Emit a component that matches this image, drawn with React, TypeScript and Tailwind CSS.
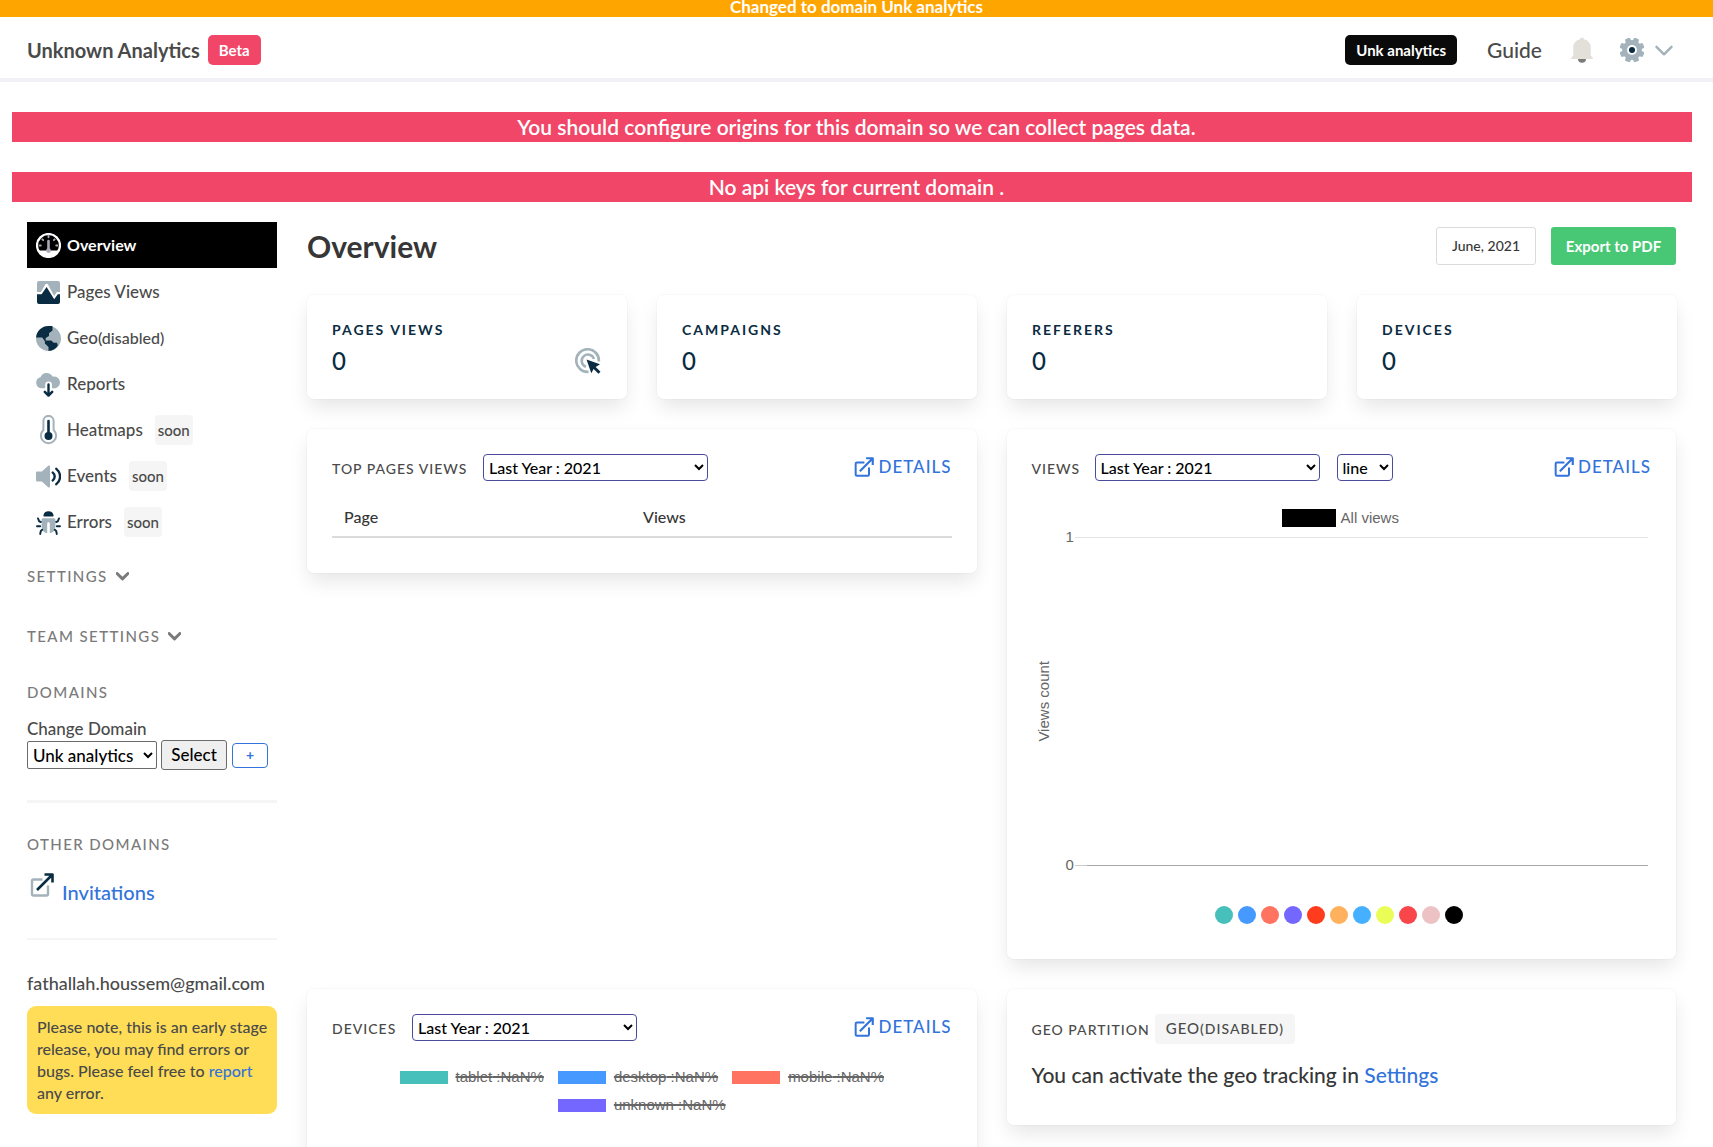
import type { ReactNode } from "react";

const DARK = "#0a2c42";
const SOFT = "#a4b3bb";

function GaugeIcon() {
  return (
    <svg viewBox="0 0 25 25" className="h-[25px] w-[25px]" aria-hidden="true">
      <circle cx="12.5" cy="12.5" r="11.5" fill="none" stroke="#fff" strokeWidth="2.2" />
      <path d="M2.5 17.5h20A12 12 0 0 1 12.5 24 12 12 0 0 1 2.5 17.5z" fill="#fff" />
      <g stroke="#a9a9b8" strokeLinecap="round">
        <path d="M12.5 8v9" strokeWidth="2.6" />
        <path d="M12.5 2.5v1.8M3.6 12.5h1.2M20.2 12.5h1.2M6.3 6.3l.9.9M18.7 6.3l-.9.9" strokeWidth="1.8" />
      </g>
      <circle cx="12.5" cy="17.6" r="2.4" fill="#a9a9b8" />
    </svg>
  );
}

function PagesIcon() {
  return (
    <svg viewBox="0 0 25 25" className="h-[25px] w-[25px]" aria-hidden="true">
      <path d="M3 1h19a2 2 0 0 1 2 2v9h-3.2l-2.6 4L12 4.5a1.6 1.6 0 0 0-2.9.2L5 12H1V3a2 2 0 0 1 2-2z" fill={SOFT} />
      <path d="M1 14.2h4.6L10.6 7l7.6 12.3 3.6-5.1H24V22a2 2 0 0 1-2 2H3a2 2 0 0 1-2-2z" fill={DARK} />
    </svg>
  );
}

function GlobeIcon() {
  return (
    <svg viewBox="0 0 25 25" className="h-[25px] w-[25px]" aria-hidden="true">
      <circle cx="12.5" cy="12.5" r="12.5" fill={SOFT} />
      <path d="M12.5 0h4v4.6L13 7.2v2.9L9.7 12v2.4h5.6l2.4 2.4h3.2l1 2.6A12.5 12.5 0 0 1 12.5 25v-4l-3.6-3.4v-2.4L6.2 11.6H.1A12.5 12.5 0 0 1 12.5 0z" fill={DARK} />
    </svg>
  );
}

function CloudIcon() {
  return (
    <svg viewBox="0 0 25 25" className="h-[25px] w-[25px]" aria-hidden="true">
      <path d="M6 16.2a5.6 5.6 0 0 1-1.6-11A6.8 6.8 0 0 1 16.6 4.6a5.8 5.8 0 0 1 2.8 11.6H16v-3.4a3.4 3.4 0 0 0-6.8 0v3.4z" fill={SOFT} />
      <path d="M12.5 12.5v10.5M8.8 19.8l3.7 3.8 3.7-3.8" fill="none" stroke={DARK} strokeWidth="2.4" strokeLinecap="round" strokeLinejoin="round" />
    </svg>
  );
}

function ThermometerIcon() {
  return (
    <svg viewBox="0 0 25 30" className="h-[30px] w-[25px]" aria-hidden="true">
      <path d="M7.4 15V6a5.1 5.1 0 0 1 10.2 0v9a7.6 7.6 0 1 1-10.2 0z" fill="none" stroke={SOFT} strokeWidth="2" />
      <path d="M12.5 6v15" stroke={DARK} strokeWidth="2.6" strokeLinecap="round" />
      <circle cx="12.5" cy="21" r="4" fill={DARK} />
    </svg>
  );
}

function SpeakerIcon() {
  return (
    <svg viewBox="0 0 25 25" className="h-[25px] w-[25px]" aria-hidden="true">
      <path d="M1.2 7.5h4.6l6.4-5.7c.8-.6 1.8-.2 1.8.8v19.8c0 1-1 1.400-1.800.8L5.800 17.500H1.200A1.200 1.200 0 0 1 0 16.300V8.700a1.200 1.200 0 0 1 1.200-1.200z" fill={SOFT} />
      <path d="M16.800 8.600c2.500 2 2.500 5.800 0 7.800M20.300 4.800c5 4.200 5 11.200 0 15.400" fill="none" stroke={DARK} strokeWidth="2.4" strokeLinecap="round" />
    </svg>
  );
}

function BugIcon() {
  return (
    <svg viewBox="0 0 25 25" className="h-[25px] w-[25px]" aria-hidden="true">
      <path d="M7.400 5.400a5.200 5.200 0 0 1 10.200 0c0 .6-.4 1-1 1H8.400c-.6 0-1-.4-1-1z" fill={DARK} />
      <path d="M7 8.200h11a1.500 1.500 0 0 1 1.400 1.500V16.500a6.900 6.900 0 0 1-5.600 6.700V13.500a1.300 1.300 0 0 0-2.600 0v9.700a6.900 6.900 0 0 1-5.600-6.700V9.700A1.500 1.500 0 0 1 7 8.200z" fill={SOFT} />
      <path d="M2 8.400l1.200 3 1.600.6M23 8.400l-1.200 3-1.600.6M1 16.300h3.200M24 16.300h-3.200M4.200 24l.6-3 1.400-1.200M20.800 24l-.6-3-1.400-1.200" fill="none" stroke={DARK} strokeWidth="1.9" strokeLinecap="round" strokeLinejoin="round" />
    </svg>
  );
}

function ExternalIcon({ arrow, box, className }: { arrow: string; box: string; className: string }) {
  return (
    <svg viewBox="0 0 24 24" className={className} aria-hidden="true" fill="none" strokeLinejoin="round">
      <path d="M12.5 6.5H3.5a1.5 1.5 0 0 0-1.5 1.500v13a1.500 1.500 0 0 0 1.500 1.500h13A1.500 1.500 0 0 0 18 21v-8.500" stroke={box} strokeWidth="2.4" />
      <path d="M7 17L22 2M14.500 1.500h8v8" stroke={arrow} strokeWidth="2.6" />
    </svg>
  );
}

function ClickIcon() {
  return (
    <svg viewBox="0 0 26 26" className="h-[26px] w-[26px]" aria-hidden="true">
      <path d="M13.5 23.800A11.300 11.300 0 1 1 23.800 13.500" fill="none" stroke={SOFT} strokeWidth="2.7" />
      <path d="M11 18.800A6.300 6.300 0 1 1 19 11" fill="none" stroke={SOFT} strokeWidth="2.5" />
      <path d="M11.500 11.500l13.500 4.800-4.300 2.600 4.800 4.800-2 2-4.900-4.800-2.300 4.300z" fill={DARK} />
    </svg>
  );
}

function BellIcon() {
  return (
    <svg viewBox="0 0 22 26" className="h-[26px] w-[22px]" aria-hidden="true">
      <path d="M11 0.500a2 2 0 0 1 2 1.800c4 1 6.700 4 6.700 8.200v8l2 2.200c.4.500.2 1.300-.6 1.300H.9c-.8 0-1-.8-.6-1.300l2-2.200v-8c0-4.200 2.700-7.200 6.700-8.200a2 2 0 0 1 2-1.800z" fill="#e3dfd9" />
      <path d="M7 22h8a4 3.700 0 0 1-8 0z" fill="#7a7a7a" />
    </svg>
  );
}

function GearIcon() {
  return (
    <svg viewBox="0 0 24 24" className="h-6 w-6" aria-hidden="true">
      <g fill={SOFT}>
        <circle cx="12" cy="12" r="10" />
        {[22.5, 67.5, 112.5, 157.5].map((a) => (
          <rect key={a} x="9.2" y="-0.5" width="5.6" height="25" rx="1.4" transform={`rotate(${a} 12 12)`} />
        ))}
      </g>
      <circle cx="12" cy="12" r="5" fill="#fff" />
      <circle cx="12" cy="12" r="3" fill={DARK} />
    </svg>
  );
}

function Chevron({ className, width }: { className: string; width: number }) {
  return (
    <svg viewBox="0 0 18 12" className={className} aria-hidden="true" fill="none" stroke="currentColor" strokeWidth={width}>
      <path d="M1.500 1.800L9 9.300l7.500-7.500" strokeLinecap="round" strokeLinejoin="round" />
    </svg>
  );
}

function Soon() {
  return <span className="ml-3 flex h-[30px] items-center rounded bg-[#f5f5f5] px-[3px] text-[15px]">soon</span>;
}

function NavItem({ icon, children, active = false }: { icon: ReactNode; children: ReactNode; active?: boolean }) {
  return (
    <li>
      <a
        href="#"
        className={
          active
            ? "flex h-[46px] items-center bg-black pl-[9px] text-base font-bold text-white"
            : "flex h-[46px] items-center pt-0.5 pl-[9px] text-[17px] font-medium"
        }
      >
        <span className="mr-[6px] flex w-[25px] justify-center">{icon}</span>
        {children}
      </a>
    </li>
  );
}

function SideLabel({ children }: { children: ReactNode }) {
  return <h2 className="text-[15px] leading-5 tracking-[1.4px] text-[#7a7a7a]">{children}</h2>;
}

function StatCard({ label, children }: { label: string; children?: ReactNode }) {
  return (
    <section className="h-[104px] rounded-[7px] bg-white px-[26px] pt-[25px] pl-[25px] shadow-[0_10px_20px_-2px_rgba(10,10,10,0.1),0_0_0_1px_rgba(10,10,10,0.02)]">
      <h2 className="text-sm leading-5 font-bold tracking-[2px] text-[#0a2c42]">{label}</h2>
      <div className="mt-1 flex h-[34px] items-center justify-between text-2xl text-[#0a2c42]">
        <span>0</span>
        {children}
      </div>
    </section>
  );
}

function Panel({ className, children }: { className: string; children: ReactNode }) {
  return (
    <section
      className={`rounded-[7px] bg-white px-[25px] pt-[25px] shadow-[0_10px_20px_-2px_rgba(10,10,10,0.1),0_0_0_1px_rgba(10,10,10,0.02)] ${className}`}
    >
      {children}
    </section>
  );
}

function PanelHead({ title, titleWidth, withType = false }: { title: string; titleWidth: string; withType?: boolean }) {
  return (
    <div className="flex h-[27px] items-center">
      <h2 className={`pt-[3px] text-sm tracking-[1px] whitespace-nowrap ${titleWidth}`}>{title}</h2>
      <select
        aria-label={`${title} period`}
        className="h-[27px] w-[225px] rounded border border-[#4b4b9b] bg-white px-px text-base text-black"
      >
        <option>Last Year : 2021</option>
      </select>
      {withType && (
        <select aria-label="Chart type" className="ml-[17px] h-[27px] w-14 rounded border border-[#4b4b9b] bg-white px-px text-base text-black">
          <option>line</option>
          <option>bar</option>
        </select>
      )}
      <a href="#" className="ml-auto flex items-center gap-1 pb-0.5 text-[17px] tracking-[1px] text-[#3273dc]">
        <ExternalIcon arrow="#3273dc" box="#3273dc" className="h-5 w-5" />
        DETAILS
      </a>
    </div>
  );
}

const swatches = [
  "bg-[#47bfba]", "bg-[#4599ff]", "bg-[#ff7360]", "bg-[#7467ff]", "bg-[#ff3c1c]", "bg-[#ffb15d]",
  "bg-[#45b0ff]", "bg-[#eafd57]", "bg-[#f8464b]", "bg-[#edc2c4]", "bg-black",
];

function DeviceKey({ name, color, className }: { name: string; color: string; className: string }) {
  return (
    <div className={`flex items-center gap-2 font-['Liberation_Sans',sans-serif] text-[15px] whitespace-nowrap text-[#666] ${className}`}>
      <span className={`h-[13px] w-12 shrink-0 ${color}`} />
      <s className="decoration-2">{name} :NaN%</s>
    </div>
  );
}

export default function App() {
  return (
    <div className="h-screen overflow-y-auto bg-white font-[Lato,sans-serif] font-medium text-[#4a4a4a] [scrollbar-width:none]">
      <div className="h-[17px] bg-[#ffa500] text-center text-[17px] leading-[14px] font-bold text-white">
        Changed to domain Unk analytics
      </div>
      <header className="flex h-[65px] items-center border-b-4 border-[#f0f0f7] pt-1 pr-10 pl-[27px]">
        <a href="#" className="text-xl leading-[30px] font-bold">Unknown Analytics</a>
        <span className="ml-2 flex h-[30px] items-center rounded-[5px] bg-[#f14668] px-[11px] pt-0.5 text-[15px] font-bold text-white">Beta</span>
        <nav className="ml-auto flex items-center">
          <span className="flex h-[30px] items-center rounded-[5px] bg-[#0a0a0a] px-[11px] pt-0.5 text-[15px] font-bold text-white">Unk analytics</span>
          <a href="#" className="ml-[30px] text-[21px]">Guide</a>
          <button aria-label="Notifications" className="ml-[29px]"><BellIcon /></button>
          <button aria-label="Account settings" className="ml-[27px] flex items-center gap-[11px] text-[#a4b3bb]">
            <GearIcon />
            <Chevron className="mt-[3px] h-3 w-[18px]" width={2.4} />
          </button>
        </nav>
      </header>

      <div className="mt-[30px] mr-[21px] ml-3 space-y-[30px] text-center text-[21px] leading-[30px] font-semibold text-white">
        <p className="bg-[#f14668] pl-[9px]">You should configure origins for this domain so we can collect pages data.</p>
        <p className="bg-[#f14668] pl-[9px]">No api keys for current domain .</p>
      </div>

      <div className="mt-5 grid grid-cols-[250px_1fr] gap-[30px] pr-9 pl-[27px]">
        <aside>
          <ul>
            <NavItem active icon={<GaugeIcon />}>Overview</NavItem>
            <NavItem icon={<PagesIcon />}>Pages Views</NavItem>
            <NavItem icon={<GlobeIcon />}>Geo<span className="text-base">(disabled)</span></NavItem>
            <NavItem icon={<CloudIcon />}>Reports</NavItem>
            <NavItem icon={<ThermometerIcon />}>Heatmaps<Soon /></NavItem>
            <NavItem icon={<SpeakerIcon />}>Events<Soon /></NavItem>
            <NavItem icon={<BugIcon />}>Errors<Soon /></NavItem>
          </ul>

          <button className="mt-[22px] flex items-center gap-2 text-[#7a7a7a]">
            <SideLabel>SETTINGS</SideLabel>
            <Chevron className="h-[9px] w-[13px]" width={4} />
          </button>
          <button className="mt-10 flex items-center gap-2 text-[#7a7a7a]">
            <SideLabel>TEAM SETTINGS</SideLabel>
            <Chevron className="h-[9px] w-[13px]" width={4} />
          </button>
          <div className="mt-9"><SideLabel>DOMAINS</SideLabel></div>

          <form className="mt-4 text-[17px]">
            <label htmlFor="domain" className="block leading-[22px]">Change Domain</label>
            <div className="flex h-[30px] items-center text-black">
              <select id="domain" className="h-7 w-[130px] rounded-[2px] border border-[#6b6b6b] bg-white px-px">
                <option>Unk analytics</option>
              </select>
              <button type="button" className="ml-1 h-[30px] w-[66px] rounded-[3px] border border-[#6b6b6b] bg-[#efefef]">Select</button>
              <button type="button" aria-label="Add domain" className="ml-[5px] flex h-[25px] w-9 items-center justify-center rounded border border-[#3273dc] text-sm font-bold text-[#3273dc]">+</button>
            </div>
          </form>

          <hr className="mt-[30px] h-[3px] border-0 bg-[#f5f5f5]" />
          <div className="mt-[31px]"><SideLabel>OTHER DOMAINS</SideLabel></div>
          <a href="#" className="mt-[19px] flex items-start gap-2 pl-[3px] text-xl text-[#3273dc]">
            <ExternalIcon arrow={DARK} box={SOFT} className="h-6 w-6" />
            <span className="pt-[5px]">Invitations</span>
          </a>
          <hr className="mt-8 h-0.5 border-0 bg-[#f5f5f5]" />
          <p className="mt-[31px] text-lg leading-6">fathallah.houssem@gmail.com</p>
          <p className="mt-[11px] rounded-[9px] bg-[#ffdd57] py-[10px] pr-[6px] pl-[10px] text-base leading-[22px]">
            Please note, this is an early stage release, you may find errors or bugs. Please feel free to{" "}
            <a href="#" className="text-[#3273dc]">report</a> any error.
          </p>
        </aside>

        <main className="min-w-0 pt-[5px]">
          <div className="mr-px flex items-center">
            <h1 className="text-3xl leading-[38px] font-bold text-[#363636]">Overview</h1>
            <button className="ml-auto h-[38px] w-[100px] rounded-[3px] border border-[#dbdbdb] text-sm text-[#363636]">June, 2021</button>
            <button className="ml-[15px] h-[38px] w-[125px] rounded-[3px] bg-[#48c774] text-[15px] font-bold text-white">Export to PDF</button>
          </div>

          <div className="mt-[30px] grid grid-cols-4 gap-[30px]">
            <StatCard label="PAGES VIEWS"><ClickIcon /></StatCard>
            <StatCard label="CAMPAIGNS" />
            <StatCard label="REFERERS" />
            <StatCard label="DEVICES" />
          </div>

          <div className="mt-[30px] mr-px grid grid-cols-2 items-start gap-[30px]">
            <Panel className="pb-[35px]">
              <PanelHead title="TOP PAGES VIEWS" titleWidth="w-[151px]" />
              <table className="mt-[19px] w-full text-left text-base text-[#363636]">
                <thead>
                  <tr className="h-[37px] border-b-2 border-[#dbdbdb]">
                    <th className="w-[299px] pb-0.5 pl-3 font-medium">Page</th>
                    <th className="pb-0.5 pl-3 font-medium">Views</th>
                  </tr>
                </thead>
              </table>
            </Panel>

            <Panel className="pb-[35px]">
              <PanelHead title="VIEWS" titleWidth="w-[63px]" withType />
              <div className="mt-[28px] flex items-center justify-center gap-[5px] pr-0.5 font-['Liberation_Sans',sans-serif] text-[15px] leading-[18px] text-[#666]">
                <span className="h-[18px] w-[54px] bg-black" />
                All views
              </div>
              <div className="flex pr-[3px] font-['Liberation_Sans',sans-serif] text-[15px] text-[#666]">
                <span className="mr-[13px] ml-[3px] w-[18px] rotate-180 self-center text-center leading-[18px] [writing-mode:vertical-rl]">Views count</span>
                <div className="flex h-[348px] grow flex-col justify-between">
                  <div className="flex h-5 items-center">
                    <span className="w-[9px]">1</span>
                    <span className="h-px grow bg-[#e5e5e5]" />
                  </div>
                  <div className="flex h-5 items-center">
                    <span className="w-[9px]">0</span>
                    <span className="h-px w-3 bg-[#ccc]" />
                    <span className="h-px grow bg-[#a8a8a8]" />
                  </div>
                </div>
              </div>
              <div className="mt-[31px] flex justify-center gap-[5px] pr-1">
                {swatches.map((c) => (
                  <button key={c} aria-label="Series colour" className={`h-[18px] w-[18px] rounded-full ${c}`} />
                ))}
              </div>
            </Panel>

            <Panel className="h-[500px]">
              <PanelHead title="DEVICES" titleWidth="w-20" />
              <div className="mt-[27px] grid grid-cols-[auto_auto_auto] justify-center gap-x-[14px] gap-y-[10px] leading-[18px]">
                <DeviceKey name="tablet" color="bg-[#47bfba]" className="" />
                <DeviceKey name="desktop" color="bg-[#4599ff]" className="" />
                <DeviceKey name="mobile" color="bg-[#ff7360]" className="" />
                <DeviceKey name="unknown" color="bg-[#7467ff]" className="col-start-2 -mr-2" />
              </div>
            </Panel>

            <Panel className="h-[136px]">
              <div className="flex h-[30px] items-center gap-[5px] text-sm tracking-[1px]">
                <h2 className="pt-0.5">GEO PARTITION</h2>
                <span className="flex h-[30px] items-center rounded bg-[#f5f5f5] px-[11px] text-[15px]">
                  GEO<span className="text-sm">(DISABLED)</span>
                </span>
              </div>
              <p className="mt-4 text-[21px] leading-[30px] text-[#363636]">
                You can activate the geo tracking in <a href="#" className="text-[#3273dc]">Settings</a>
              </p>
            </Panel>
          </div>
        </main>
      </div>
    </div>
  );
}
